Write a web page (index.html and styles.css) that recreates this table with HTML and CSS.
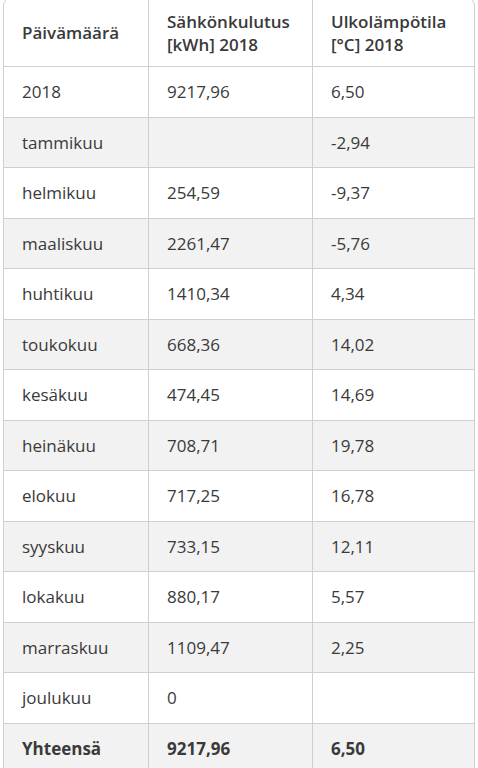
FILE: index.html
```html
<!DOCTYPE html>
<html lang="fi">
<head>
<meta charset="utf-8">
<link rel="stylesheet" href="styles.css">
</head>
<body>
<div class="wrap">
<table class="data">
<thead>
<tr class="head"><th>Päivämäärä</th><th>Sähkönkulutus [kWh] 2018</th><th>Ulkolämpötila [°C] 2018</th></tr>
</thead>
<tbody>
<tr><td>2018</td><td>9217,96</td><td>6,50</td></tr>
<tr><td>tammikuu</td><td></td><td>-2,94</td></tr>
<tr><td>helmikuu</td><td>254,59</td><td>-9,37</td></tr>
<tr><td>maaliskuu</td><td>2261,47</td><td>-5,76</td></tr>
<tr><td>huhtikuu</td><td>1410,34</td><td>4,34</td></tr>
<tr><td>toukokuu</td><td>668,36</td><td>14,02</td></tr>
<tr><td>kesäkuu</td><td>474,45</td><td>14,69</td></tr>
<tr><td>heinäkuu</td><td>708,71</td><td>19,78</td></tr>
<tr><td>elokuu</td><td>717,25</td><td>16,78</td></tr>
<tr><td>syyskuu</td><td>733,15</td><td>12,11</td></tr>
<tr><td>lokakuu</td><td>880,17</td><td>5,57</td></tr>
<tr><td>marraskuu</td><td>1109,47</td><td>2,25</td></tr>
<tr><td>joulukuu</td><td>0</td><td></td></tr>
<tr class="total"><td>Yhteensä</td><td>9217,96</td><td>6,50</td></tr>
</tbody>
</table>
</div>
</body>
</html>
```
FILE: styles.css
```css
html, body {
  margin: 0;
  padding: 0;
  background: #ffffff;
}
body {
  font-family: "Open Sans", "Noto Sans", sans-serif;
  color: #3a3a3a;
  font-size: 17px;
}
.wrap {
  margin: -4px 0 0 3px;
  width: 472px;
  border: 1px solid #cfcfcf;
  border-radius: 10px 10px 0 0;
  overflow: hidden;
  box-sizing: border-box;
}
.data {
  width: 100%;
  border-collapse: collapse;
  table-layout: fixed;
}
.data th, .data td {
  text-align: left;
  vertical-align: middle;
  padding: 0 18px;
  border-left: 1px solid #cfcfcf;
  border-top: 1px solid #cfcfcf;
  line-height: 23px;
}
.data th:first-child, .data td:first-child {
  border-left: none;
  width: 108px;
}
.data th:nth-child(2), .data td:nth-child(2) {
  width: 127px;
}
.data thead th {
  border-top: none;
  font-weight: 600;
  height: 67px;
  padding-top: 2px;
}
.data tbody tr {
  height: 50.5px;
}
.data tbody tr:nth-child(even) {
  background: #f2f2f2;
}
.total td {
  font-weight: 700;
}
```
